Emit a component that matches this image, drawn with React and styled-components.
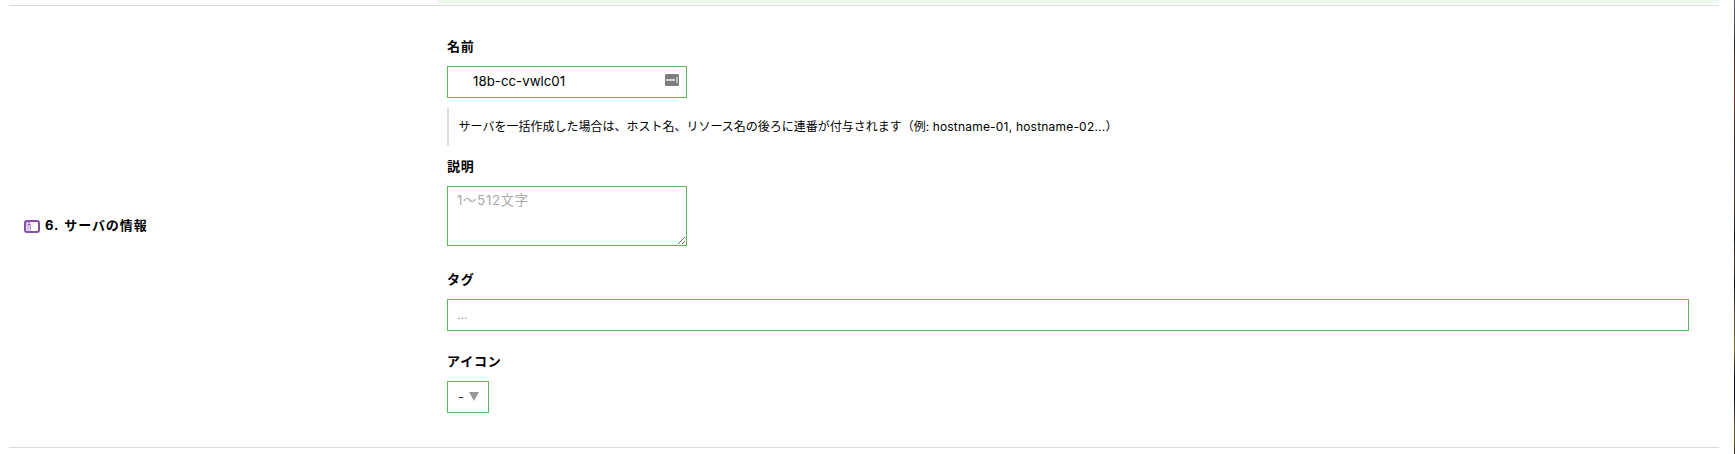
import React from 'react';
import styled, { createGlobalStyle } from 'styled-components';

const GlobalStyle = createGlobalStyle`
  * { box-sizing: border-box; }
  body {
    margin: 0;
    background: #fff;
    color: #000;
    font-family: Inter, "Noto Sans CJK JP", sans-serif;
    overflow: hidden;
  }
`;

const Page = styled.div`
  display: flex;
  justify-content: space-between;
  height: 454px;
`;

const Form = styled.main`
  width: 1710px;
  margin-left: 9px;
`;

const PreviousSection = styled.div`
  height: 3px;
  margin: 0 0 2px 428px;
  background: #eff8ee;
`;

const Section = styled.section`
  display: grid;
  grid-template-columns: 438px 1fr;
  height: 443px;
  border-top: 1px solid #dbdbdb;
  border-bottom: 1px solid #dbdbdb;
`;

const Heading = styled.h2`
  display: flex;
  align-items: center;
  align-self: center;
  gap: 5px;
  margin: 0 0 3px 15px;
  height: 20px;
  font-size: 13px;
  line-height: 20px;
  font-weight: 700;
  letter-spacing: 0.9px;
  word-spacing: 1.5px;
  white-space: pre;

  svg { margin-top: 2px; }
`;

const Fields = styled.div`
  display: flex;
  flex-direction: column;
  align-items: flex-start;
  padding: 30px 30px 0 0;
`;

const Label = styled.label`
  height: 20px;
  margin: ${(p) => p.$top || 0}px 0 10px;
  font-size: 13px;
  line-height: 20px;
  font-weight: 700;
  letter-spacing: 0.8px;
`;

const Box = styled.div`
  display: flex;
  align-items: center;
  width: ${(p) => p.$width || '100%'};
  height: 32px;
  padding: 0 7px 2px 9px;
  border: 1px solid #5cb85c;
  background: #fff;
`;

const TextInput = styled.input`
  flex: 1;
  min-width: 0;
  height: 28px;
  padding: 0 0 0 ${(p) => p.$indent || 0}px;
  border: 0;
  outline: 0;
  background: transparent;
  color: #000;
  font-family: inherit;
  font-size: 13.3px;
  &::placeholder { color: #999; opacity: 1; font-size: 12px; }
`;

const Note = styled.p`
  height: 38px;
  margin: 10px 0 0;
  padding-left: 9.5px;
  border-left: 2px solid #ddd;
  font-size: 12px;
  line-height: 37px;
  white-space: nowrap;
`;

const Latin = styled.span`
  letter-spacing: 0.2px;
`;

const Description = styled.textarea`
  display: block;
  width: 240px;
  height: 60px;
  padding: 3px 9px;
  border: 1px solid #5cb85c;
  outline: 0;
  font-family: inherit;
  font-size: 13.3px;
  line-height: 20px;
  letter-spacing: 0.7px;
  resize: both;
  &::placeholder { color: #aaa; opacity: 1; }
`;

const IconSelect = styled.button`
  display: flex;
  align-items: center;
  gap: 5px;
  width: 42px;
  height: 32px;
  padding: 0 0 1px 10px;
  border: 1px solid #5cb85c;
  background: #fff;
  color: #333;
  font-family: inherit;
  font-size: 13px;
`;

const WindowEdge = styled.div`
  width: 1px;
  background: linear-gradient(#5b6166 0, #454b4f 34px, #202020 42px, #4a2a22 60px, #7a3528 95px, #4a3028 125px, #2a2420 150px, #3c3444 170px, #4a3a30 200px, #151515 235px, #4a3a30 262px, #0c0f16 285px, #544a38 310px, #7a6a20 350px, #10131a 375px, #10131a 400px, #5a4b40 420px, #6a5c20 440px, #3a3028 454px);
`;

const InfoIcon = () => (
  <svg width="16" height="13" viewBox="0 0 16 13">
    <defs>
      <linearGradient id="info-shade" x1="0" x2="1" y1="0" y2="0.6">
        <stop offset="0" stopColor="#cdb6de" />
        <stop offset="0.6" stopColor="#fff" />
      </linearGradient>
    </defs>
    <rect x="1" y="1" width="14" height="11" rx="2" fill="url(#info-shade)" stroke="#8250a5" strokeWidth="2" />
    <path d="M4 3.3h2M3.5 5.7h2v3.5M3.5 9.2h3.5" fill="none" stroke="#8a5cab" strokeWidth="2.2" />
    <path d="M4.2 3.3h1.5M3.5 5.7h1.8v3.5M3.5 9.2h3.2" fill="none" stroke="#fff" strokeWidth="1.1" />
  </svg>
);

const KeyIcon = () => (
  <svg width="14" height="14" viewBox="0 0 14 14">
    <rect width="14" height="12" rx="1.5" fill="#7d7d7d" />
    <path d="M1.5 5h2v2h-2zM4.5 5h2v2h-2zM7.5 5h2v2h-2zM11.5 3h1v6h-1z" fill="#fff" />
  </svg>
);

const Caret = () => (
  <svg width="10" height="9" viewBox="0 0 10 9">
    <path d="M0 0h10L5 9z" fill="#999" />
  </svg>
);

export default function App() {
  return (
    <>
      <GlobalStyle />
      <Page>
        <Form>
          <PreviousSection />
          <Section>
            <Heading><InfoIcon />6. サーバの情報</Heading>
            <Fields>
              <Label htmlFor="name">名前</Label>
              <Box $width="240px">
                <TextInput id="name" $indent={16} defaultValue="18b-cc-vwlc01" />
                <KeyIcon />
              </Box>
              <Note>サーバを一括作成した場合は、ホスト名、リソース名の後ろに連番が付与されます（例: <Latin>hostname-01, hostname-02...</Latin>）</Note>
              <Label htmlFor="description" $top={10}>説明</Label>
              <Description id="description" placeholder="1〜512文字" />
              <Label htmlFor="tags" $top={23}>タグ</Label>
              <Box><TextInput id="tags" placeholder="..." /></Box>
              <Label $top={20}>アイコン</Label>
              <IconSelect type="button">-<Caret /></IconSelect>
            </Fields>
          </Section>
        </Form>
        <WindowEdge />
      </Page>
    </>
  );
}
